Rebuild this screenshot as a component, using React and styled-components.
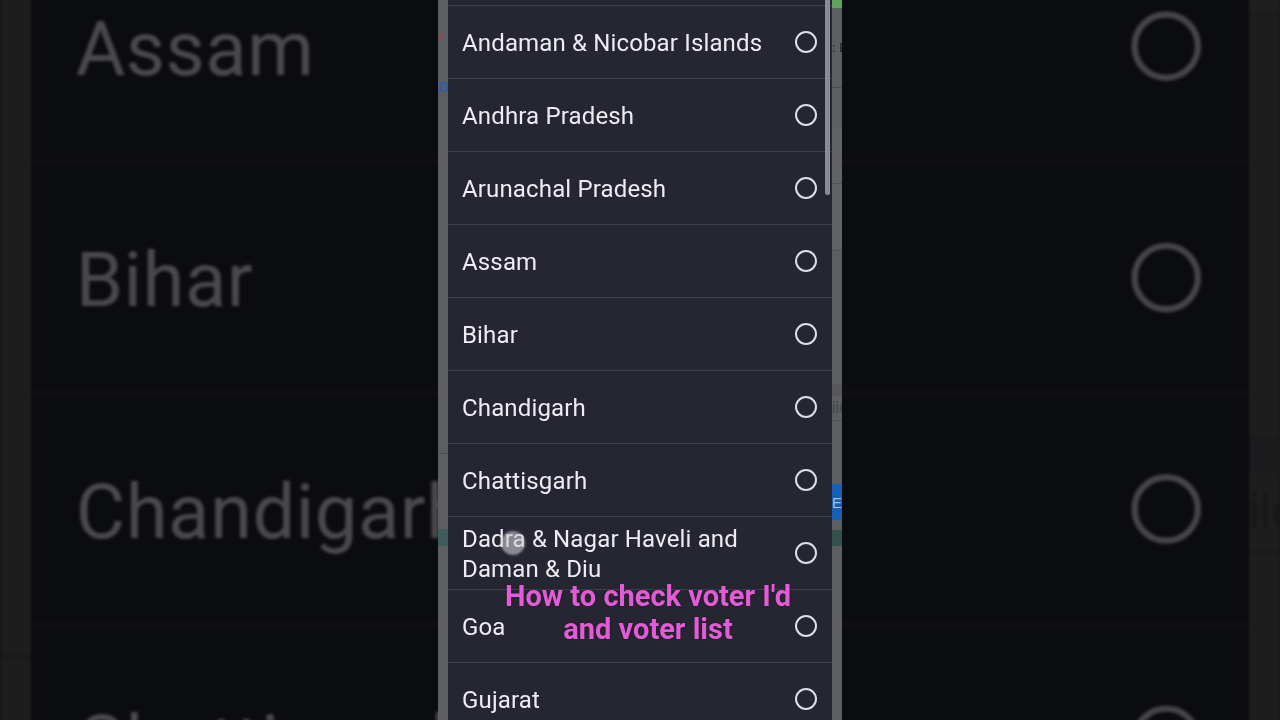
import React from 'react';
import styled, { createGlobalStyle } from 'styled-components';

const GlobalStyle = createGlobalStyle`
  html, body {
    margin: 0;
    padding: 0;
    background: #0b0c10;
    overflow: hidden;
  }
  body {
    font-family: Roboto, "Noto Sans", "Liberation Sans", sans-serif;
  }
`;

const states = [
  'Select State',
  'Andaman & Nicobar Islands',
  'Andhra Pradesh',
  'Arunachal Pradesh',
  'Assam',
  'Bihar',
  'Chandigarh',
  'Chattisgarh',
  'Dadra & Nagar Haveli and Daman & Diu',
  'Goa',
  'Gujarat',
  'Haryana'
];

const Stage = styled.div`
  width: 1280px;
  height: 720px;
  display: grid;
  place-items: center;
  overflow: hidden;
  background: #0b0c10;
`;

const Backdrop = styled.div`
  grid-area: 1 / 1;
  transform: scale(3.17);
  filter: blur(0.45px) brightness(0.31);
`;

const Foreground = styled.div`
  grid-area: 1 / 1;
  position: relative;
`;

const Screen = styled.div`
  display: flex;
  width: 404px;
  height: 720px;
  overflow: hidden;
`;

const Strip = styled.div`
  width: 10px;
  display: flex;
  flex-direction: column;
  background: #5c5e60;
  overflow: hidden;
`;

const Patch = styled.div`
  flex: 0 0 ${p => p.h}px;
  background: ${p => p.bg || 'transparent'};
  border-bottom: ${p => (p.line ? `1px solid ${p.line}` : 'none')};
  display: flex;
  align-items: center;
  justify-content: ${p => (p.end ? 'flex-end' : 'flex-start')};
  font-family: "Liberation Sans", Arial, sans-serif;
  font-size: ${p => p.fs || 12}px;
  font-weight: ${p => p.fw || 400};
  color: ${p => p.fg || '#1a1a1a'};
  white-space: nowrap;
  overflow: hidden;
`;

const ListPane = styled.div`
  position: relative;
  flex: 1;
  background: #252631;
  overflow: hidden;
`;

const ListBody = styled.ul`
  list-style: none;
  margin: -67px 0 0;
  padding: 0;
`;

const Row = styled.li`
  box-sizing: border-box;
  height: 73px;
  display: flex;
  align-items: center;
  padding: 0 15px 0 14px;
  border-bottom: 1px solid #3c3d49;
`;

const Label = styled.span`
  flex: 1;
  padding: 3px 20px 0 0;
  font-size: 24px;
  line-height: 29.5px;
  color: #ececf2;
  letter-spacing: 0.15px;
`;

const Radio = styled.span`
  box-sizing: border-box;
  flex: 0 0 22px;
  width: 22px;
  height: 22px;
  border-radius: 50%;
  border: 2px solid #dedee6;
`;

const ScrollThumb = styled.div`
  position: absolute;
  top: 0;
  right: 2px;
  width: 5px;
  height: 195px;
  border-radius: 0 0 3px 3px;
  background: #8a8b95;
`;

const Touch = styled.div`
  position: absolute;
  left: 63px;
  top: 531px;
  width: 24px;
  height: 24px;
  border-radius: 50%;
  background: rgba(205, 205, 210, 0.6);
  filter: blur(1px);
`;

const Caption = styled.div`
  position: absolute;
  left: 0;
  right: 0;
  top: 580px;
  padding-left: 16px;
  text-align: center;
  font-family: Roboto, "Liberation Sans", sans-serif;
  font-weight: 700;
  font-size: 29px;
  line-height: 33px;
  color: #e35bd6;
  text-shadow: 0 0 2px rgba(0, 0, 0, 0.35);
`;

function LeftStrip() {
  return (
    <Strip>
      <Patch h={30} />
      <Patch h={18} fg="#b23a3a" fs={13}>*</Patch>
      <Patch h={30} />
      <Patch h={18} end fg="#2c5fb0" fs={14} fw={700}>D</Patch>
      <Patch h={357} line="#4c4e50" />
      <Patch h={75} />
      <Patch h={17} bg="#3f5c5b" />
      <Patch h={175} />
    </Strip>
  );
}

function RightStrip() {
  return (
    <Strip>
      <Patch h={8} bg="#5da55c" />
      <Patch h={30} />
      <Patch h={18} fs={13}>: L</Patch>
      <Patch h={31} line="#4a4c4e" />
      <Patch h={40} />
      <Patch h={55} bg="#606264" line="#515355" />
      <Patch h={66} bg="#606264" line="#515355" />
      <Patch h={133} />
      <Patch h={12} bg="#55575a" />
      <Patch h={24} fg="#46484a" fs={16} line="#4f5153">ile</Patch>
      <Patch h={63} />
      <Patch h={36} bg="#1760b6" fg="#a9bfd9" fs={15}>E.</Patch>
      <Patch h={10} />
      <Patch h={16} bg="#35504e" />
      <Patch h={178} />
    </Strip>
  );
}

function PhoneScreen({ withThumb }) {
  return (
    <Screen>
      <LeftStrip />
      <ListPane>
        <ListBody>
          {states.map(name => (
            <Row key={name}>
              <Label>{name}</Label>
              <Radio />
            </Row>
          ))}
        </ListBody>
        {withThumb && <ScrollThumb />}
      </ListPane>
      <RightStrip />
    </Screen>
  );
}

export default function App() {
  return (
    <>
      <GlobalStyle />
      <Stage>
        <Backdrop>
          <PhoneScreen />
        </Backdrop>
        <Foreground>
          <PhoneScreen withThumb />
          <Touch />
          <Caption>
            How to check voter I'd
            <br />
            and voter list
          </Caption>
        </Foreground>
      </Stage>
    </>
  );
}
